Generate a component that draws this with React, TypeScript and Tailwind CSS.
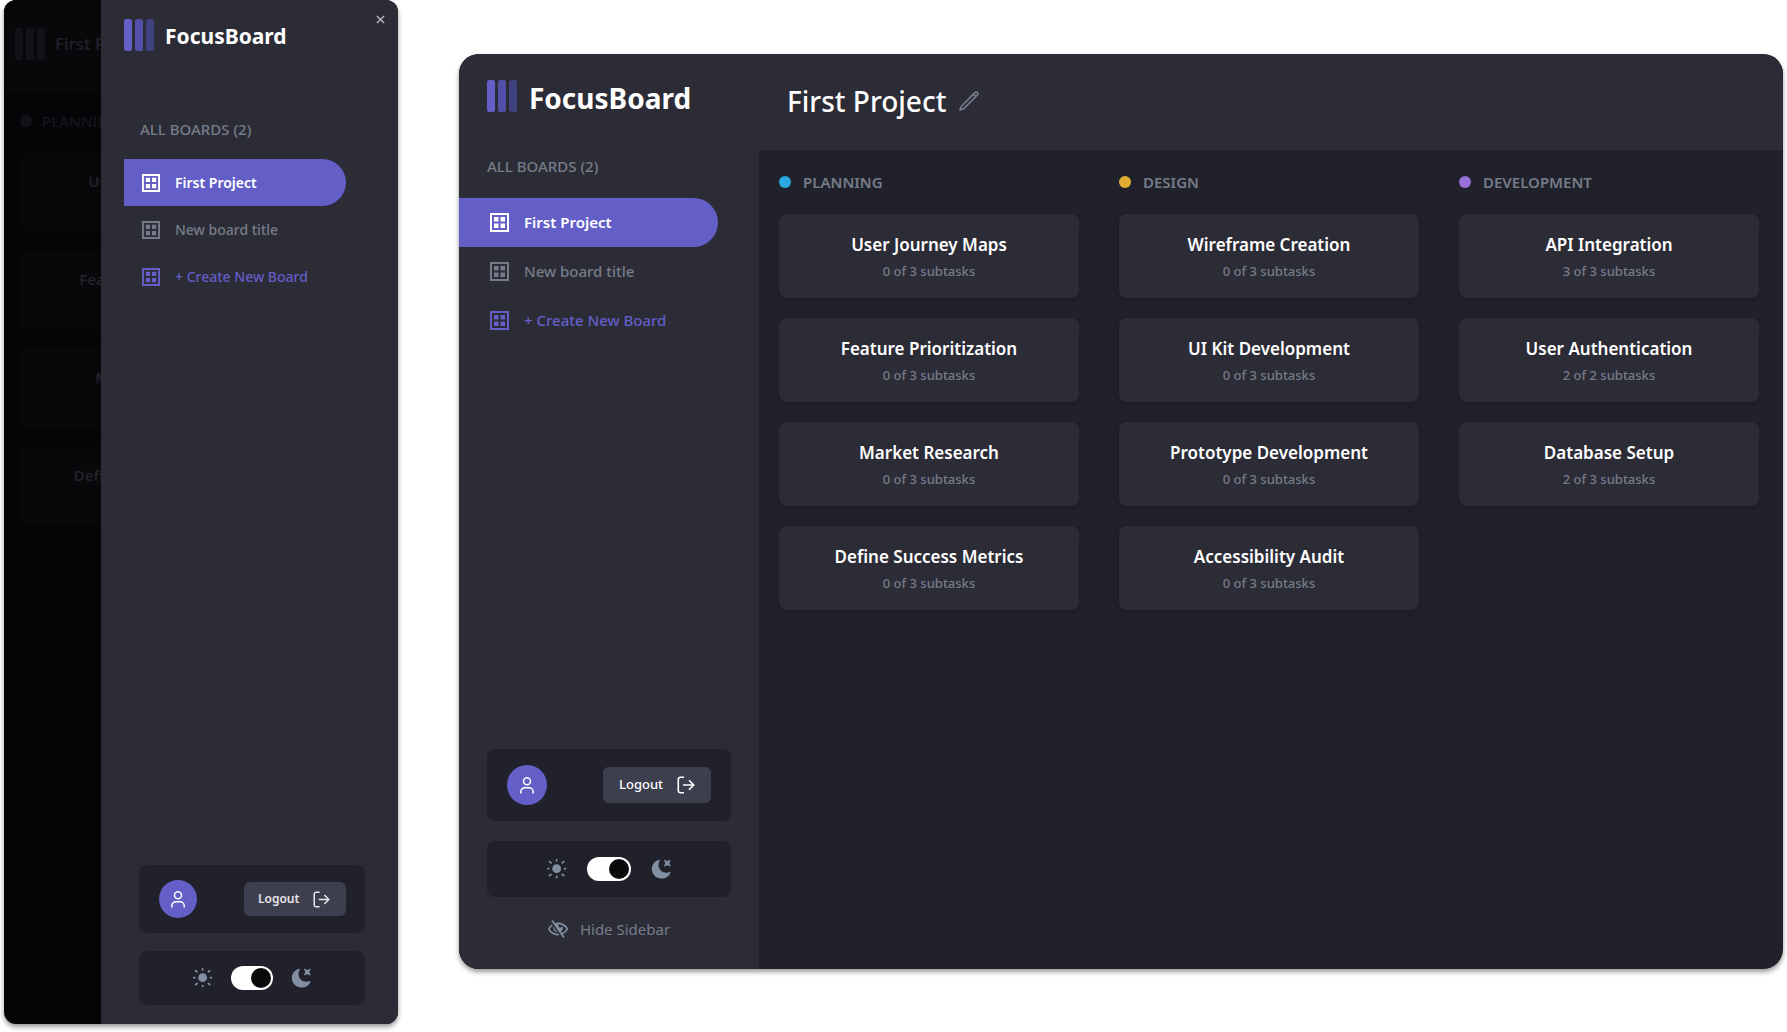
import React from "react";

type Size = "large" | "small";

const boards = ["First Project", "New board title"];

const columns = [
  {
    name: "PLANNING",
    dot: "bg-[#29a9e0]",
    tasks: [
      ["User Journey Maps", "0 of 3 subtasks"],
      ["Feature Prioritization", "0 of 3 subtasks"],
      ["Market Research", "0 of 3 subtasks"],
      ["Define Success Metrics", "0 of 3 subtasks"],
    ],
  },
  {
    name: "DESIGN",
    dot: "bg-[#e0ad33]",
    tasks: [
      ["Wireframe Creation", "0 of 3 subtasks"],
      ["UI Kit Development", "0 of 3 subtasks"],
      ["Prototype Development", "0 of 3 subtasks"],
      ["Accessibility Audit", "0 of 3 subtasks"],
    ],
  },
  {
    name: "DEVELOPMENT",
    dot: "bg-[#9870d8]",
    tasks: [
      ["API Integration", "3 of 3 subtasks"],
      ["User Authentication", "2 of 2 subtasks"],
      ["Database Setup", "2 of 3 subtasks"],
    ],
  },
];

function LogoBars({ className }: { className: string }) {
  return (
    <svg viewBox="0 0 30 32" className={className} aria-hidden="true">
      <rect x="0" width="8" height="32" rx="2.5" fill="#635fc7" />
      <rect x="11" width="8" height="32" rx="2.5" fill="#534fa8" />
      <rect x="22" width="8" height="32" rx="2.5" fill="#40417f" />
    </svg>
  );
}

function BoardIcon({ className }: { className: string }) {
  return (
    <svg viewBox="0 0 19 19" className={className} fill="currentColor" aria-hidden="true">
      <path fillRule="evenodd" d="M0 0h19v19H0V0Zm2 2v15h15V2H2Z" />
      <path d="M4 4h4.5v4.5H4zM10.5 4H15v4.5h-4.5zM4 10.5h4.5V15H4zM10.5 10.5H15V15h-4.5z" />
    </svg>
  );
}

function SunIcon({ className }: { className: string }) {
  return (
    <svg viewBox="0 0 19 19" className={className} fill="currentColor" aria-hidden="true">
      <path d="M9.167 15.833a.833.833 0 0 1 .833.834v.833a.833.833 0 0 1-1.667 0v-.833a.833.833 0 0 1 .834-.834ZM3.75 13.75a.833.833 0 0 1 .59 1.422l-1.25 1.25a.833.833 0 0 1-1.18-1.178l1.25-1.25a.833.833 0 0 1 .59-.244Zm10.833 0c.221 0 .433.088.59.244l1.25 1.25a.833.833 0 0 1-1.179 1.178l-1.25-1.25a.833.833 0 0 1 .59-1.422ZM9.167 5a4.167 4.167 0 1 1 0 8.334 4.167 4.167 0 0 1 0-8.334Zm-7.5 3.333a.833.833 0 0 1 0 1.667H.833a.833.833 0 1 1 0-1.667h.834Zm15.833 0a.833.833 0 0 1 0 1.667h-.833a.833.833 0 0 1 0-1.667h.833Zm-1.667-6.666a.833.833 0 0 1 .59 1.422l-1.25 1.25a.833.833 0 1 1-1.179-1.178l1.25-1.25a.833.833 0 0 1 .59-.244Zm-13.333 0c.221 0 .433.088.59.244l1.25 1.25a.833.833 0 0 1-1.18 1.178L1.91 3.09a.833.833 0 0 1 .59-1.422ZM9.167 0A.833.833 0 0 1 10 .833v.834a.833.833 0 1 1-1.667 0V.833A.833.833 0 0 1 9.167 0Z" />
    </svg>
  );
}

function MoonIcon({ className }: { className: string }) {
  return (
    <svg viewBox="0 0 16 16" className={className} fill="currentColor" aria-hidden="true">
      <path d="M6.474.682c.434-.11.718.406.481.78A6.067 6.067 0 0 0 6.01 4.72c0 3.418 2.827 6.187 6.314 6.187.89.002 1.77-.182 2.584-.54.408-.18.894.165.724.57-1.16 2.775-3.944 4.73-7.194 4.73-4.292 0-7.771-3.41-7.771-7.615 0-3.541 2.466-6.518 5.807-7.37Zm8.433.07c.442-.294.969.232.674.674l-.525.787a1.943 1.943 0 0 0 0 2.157l.525.788c.295.441-.232.968-.674.673l-.787-.525a1.943 1.943 0 0 0-2.157 0l-.786.525c-.442.295-.97-.232-.675-.673l.525-.788a1.943 1.943 0 0 0 0-2.157l-.525-.787c-.295-.442.232-.968.674-.673l.787.525a1.943 1.943 0 0 0 2.157 0Z" />
    </svg>
  );
}

function HideIcon() {
  return (
    <svg viewBox="0 0 18 16" className="h-[18px] w-5 text-[#828fa3]" fill="currentColor" aria-hidden="true">
      <path d="M8.522 11.223a4.252 4.252 0 0 1-3.654-5.22l3.654 5.22ZM9 12.25A8.685 8.685 0 0 1 1.5 8a8.612 8.612 0 0 1 2.76-2.864l-.86-1.23A10.112 10.112 0 0 0 .208 7.238a1.5 1.5 0 0 0 0 1.524A10.187 10.187 0 0 0 9 13.75c.414 0 .828-.025 1.239-.074l-1-1.43A8.88 8.88 0 0 1 9 12.25Zm8.792-3.488a10.14 10.14 0 0 1-4.486 4.046l1.504 2.148a.375.375 0 0 1-.092.523l-.648.453a.375.375 0 0 1-.523-.092L3.19 1.044A.375.375 0 0 1 3.282.52L3.93.068a.375.375 0 0 1 .523.092l1.735 2.479A10.308 10.308 0 0 1 9 2.25c3.746 0 7.031 2 8.792 4.988a1.5 1.5 0 0 1 0 1.524ZM16.5 8a8.674 8.674 0 0 0-6.755-4.219A1.75 1.75 0 1 0 12.75 5v-.001a4.25 4.25 0 0 1-1.154 5.366l.834 1.192A8.641 8.641 0 0 0 16.5 8Z" />
    </svg>
  );
}

function UserIcon() {
  return (
    <svg viewBox="0 0 14 17" className="h-[17px] w-3.5" fill="none" stroke="currentColor" strokeWidth="1.5" aria-hidden="true">
      <circle cx="7" cy="4.3" r="3.5" />
      <path d="M.8 16.6v-1.8a4 4 0 0 1 4-4h4.4a4 4 0 0 1 4 4v1.8" />
    </svg>
  );
}

function LogoutIcon({ className }: { className: string }) {
  return (
    <svg viewBox="0 0 18 18" className={className} fill="none" stroke="currentColor" strokeWidth="1.6" aria-hidden="true">
      <path d="M7 1.3H3.3a2 2 0 0 0-2 2v11.4a2 2 0 0 0 2 2H7M6 9h10.5M12 4.3 16.7 9 12 13.7" />
    </svg>
  );
}

function PencilIcon() {
  return (
    <svg viewBox="0 0 24 24" className="size-[22px]" fill="none" stroke="currentColor" strokeWidth="1.8" strokeLinecap="round" strokeLinejoin="round" aria-hidden="true">
      <path d="m16.862 4.487 1.687-1.688a1.875 1.875 0 1 1 2.652 2.652L6.832 19.82a4.5 4.5 0 0 1-1.897 1.13l-2.685.8.8-2.685a4.5 4.5 0 0 1 1.13-1.897L16.863 4.487Zm0 0L19.5 7.125" />
    </svg>
  );
}

function AccountCard({ size }: { size: Size }) {
  const large = size === "large";
  return (
    <div className={large ? "flex h-18 items-center justify-between rounded-lg bg-[#21212c] px-5" : "flex h-17 items-center justify-between rounded-lg bg-[#21212c] pr-[19px] pl-5"}>
      <span className={large ? "flex size-10 items-center justify-center rounded-full bg-[#635fc7] text-white" : "flex size-[38px] items-center justify-center rounded-full bg-[#635fc7] text-white"}>
        <UserIcon />
      </span>
      <button
        type="button"
        className={large ? "flex h-9 w-27 items-center justify-between rounded-md bg-[#3e3f4e] px-4 text-[13px] font-medium text-white" : "flex h-[34px] w-[102px] items-center justify-between rounded-md bg-[#3e3f4e] pr-4 pl-3.5 text-xs font-semibold text-[#e4e4e9]"}
      >
        Logout
        <LogoutIcon className={large ? "size-[18px]" : "size-[17px]"} />
      </button>
    </div>
  );
}

function ThemeCard({ size }: { size: Size }) {
  const large = size === "large";
  return (
    <div className={large ? "flex h-14 items-center justify-center gap-5 rounded-lg bg-[#21212c] text-[#828fa3]" : "flex h-[54px] items-center justify-center gap-[18px] rounded-lg bg-[#21212c] text-[#828fa3]"}>
      <SunIcon className="size-5" />
      <label className={large ? "relative h-6 w-11 cursor-pointer rounded-full bg-white" : "relative h-6 w-[42px] cursor-pointer rounded-full bg-white"}>
        <input type="checkbox" defaultChecked aria-label="Dark theme" className="peer sr-only" />
        <span className="absolute top-0.5 left-0.5 size-5 rounded-full bg-[#0a0a0c] peer-checked:right-0.5 peer-checked:left-auto" />
      </label>
      <MoonIcon className="size-5" />
    </div>
  );
}

function MainSidebar() {
  return (
    <aside className="flex w-75 shrink-0 flex-col bg-[#2c2c37]">
      <div className="flex items-start gap-3 pt-[26px] pl-7">
        <LogoBars className="h-8 w-[30px]" />
        <span className="text-[28px] leading-9 font-bold text-white">FocusBoard</span>
      </div>
      <h2 className="mt-10 pl-7 text-[15px] leading-5 font-medium text-[#757c89]">ALL BOARDS (2)</h2>
      <nav className="mt-[22px] flex flex-col pr-[41px] text-[15px]" aria-label="Boards">
        <button type="button" className="flex h-[49px] items-center gap-[15px] rounded-r-full bg-[#635fc7] pl-[31px] font-semibold text-white">
          <BoardIcon className="size-[19px]" />
          {boards[0]}
        </button>
        <button type="button" className="flex h-[49px] items-center gap-[15px] pl-[31px] font-medium text-[#757c89]">
          <BoardIcon className="size-[19px]" />
          {boards[1]}
        </button>
        <button type="button" className="flex h-[49px] items-center gap-[15px] pl-[31px] font-medium text-[#635fc7]">
          <BoardIcon className="size-[19px]" />
          + Create New Board
        </button>
      </nav>
      <div className="mt-auto flex flex-col gap-5 px-7 pb-7">
        <AccountCard size="large" />
        <ThemeCard size="large" />
        <button type="button" className="flex h-6 items-center justify-center gap-3 text-[15px] text-[#757c89]">
          <HideIcon />
          Hide Sidebar
        </button>
      </div>
    </aside>
  );
}

function DesktopBoard() {
  return (
    <section className="flex min-h-[915px] min-w-0 flex-1 overflow-hidden rounded-[20px] bg-[#21212c] shadow-[0_3px_5px_rgba(0,0,0,0.4)]">
      <MainSidebar />
      <main className="flex min-w-0 flex-1 flex-col">
        <header className="flex h-24 items-center gap-3 bg-[#2c2c37] pb-0.5 pl-7 text-[#757c89]">
          <h1 className="text-[28px] leading-9 font-medium text-white">First Project</h1>
          <button type="button" aria-label="Rename board">
            <PencilIcon />
          </button>
        </header>
        <div className="grid grid-cols-3 gap-10 py-5 pr-6 pl-5">
          {columns.map((column) => (
            <section key={column.name}>
              <h2 className="flex h-6 items-center gap-3 text-[15px] font-semibold text-[#757c89]">
                <span className={`size-3 rounded-full ${column.dot}`} />
                {column.name}
              </h2>
              <ul className="mt-5 flex flex-col gap-5">
                {column.tasks.map(([title, status]) => (
                  <li key={title} className="flex h-21 flex-col items-center justify-center rounded-lg bg-[#2c2c37] pt-0.5 shadow-[0_3px_6px_rgba(0,0,0,0.15)]">
                    <h3 className="text-[17px] leading-7 font-semibold text-white">{title}</h3>
                    <p className="text-[13px] leading-6 font-medium text-[#757c89]">{status}</p>
                  </li>
                ))}
              </ul>
            </section>
          ))}
        </div>
      </main>
    </section>
  );
}

function DimmedBoard() {
  return (
    <div className="w-[97px] shrink-0 overflow-hidden" aria-hidden="true">
      <div className="flex h-[91px] items-center gap-2.5 bg-[#08080a] pb-1 pl-[11px] whitespace-nowrap text-[#22222c]">
        <svg viewBox="0 0 30 32" className="h-8 w-[30px] shrink-0" fill="#121219">
          <rect x="0" width="8" height="32" rx="2.5" />
          <rect x="11" width="8" height="32" rx="2.5" />
          <rect x="22" width="8" height="32" rx="2.5" />
        </svg>
        <span className="text-[17px] font-medium">First Project</span>
      </div>
      <div className="w-[306px] px-4 pt-[18px] text-[#15151c]">
        <div className="flex h-6 items-center gap-2.5 text-[15px] font-medium">
          <span className="size-3 rounded-full bg-[#121219]" />
          PLANNING
        </div>
        <div className="mt-5 flex flex-col gap-5">
          {columns[0].tasks.map(([title]) => (
            <p key={title} className="h-[78px] rounded-lg bg-[#08080a] pt-4 text-center text-[15px] leading-6 font-semibold text-[#22222c]">
              {title}
            </p>
          ))}
        </div>
      </div>
    </div>
  );
}

function MobileDrawer() {
  return (
    <section className="flex min-h-[1024px] w-[394px] shrink-0 overflow-hidden rounded-xl bg-[#050507] shadow-[0_3px_5px_rgba(0,0,0,0.4)]">
      <DimmedBoard />
      <aside className="relative flex flex-1 flex-col bg-[#2c2c37]">
        <button type="button" aria-label="Close" className="absolute top-[11px] right-2.5 flex size-4 items-center justify-center text-[#b9b9c2]">
          <svg viewBox="0 0 10 10" className="size-[9px]" fill="none" stroke="currentColor" strokeWidth="1.5" aria-hidden="true">
            <path d="m1 1 8 8M9 1 1 9" />
          </svg>
        </button>
        <div className="flex items-center gap-[11px] pt-[18px] pl-[23px]">
          <LogoBars className="h-8 w-[30px]" />
          <span className="pt-0.5 text-[21px] leading-8 font-bold text-white">FocusBoard</span>
        </div>
        <h2 className="mt-[67px] pl-[39px] text-[15px] leading-5 font-medium text-[#757c89]">ALL BOARDS (2)</h2>
        <nav className="mt-5 mr-[52px] ml-[23px] flex flex-col text-[14px]" aria-label="Boards">
          <button type="button" className="flex h-[47px] items-center gap-[15px] rounded-r-full bg-[#635fc7] pl-[18px] font-semibold text-white">
            <BoardIcon className="size-[18px]" />
            {boards[0]}
          </button>
          <button type="button" className="flex h-[47px] items-center gap-[15px] pl-[18px] font-medium text-[#757c89]">
            <BoardIcon className="size-[18px]" />
            {boards[1]}
          </button>
          <button type="button" className="flex h-[47px] items-center gap-[15px] pl-[18px] font-medium text-[#635fc7]">
            <BoardIcon className="size-[18px]" />
            + Create New Board
          </button>
        </nav>
        <div className="mt-auto flex flex-col gap-[18px] pr-[33px] pb-[19px] pl-[38px]">
          <AccountCard size="small" />
          <ThemeCard size="small" />
        </div>
      </aside>
    </section>
  );
}

export default function App() {
  return (
    <div className="flex min-h-screen items-start gap-[61px] bg-white pr-1 pl-1 font-['Noto_Sans','Open_Sans',sans-serif]">
      <MobileDrawer />
      <div className="flex min-w-0 flex-1 pt-[54px]">
        <DesktopBoard />
      </div>
    </div>
  );
}
